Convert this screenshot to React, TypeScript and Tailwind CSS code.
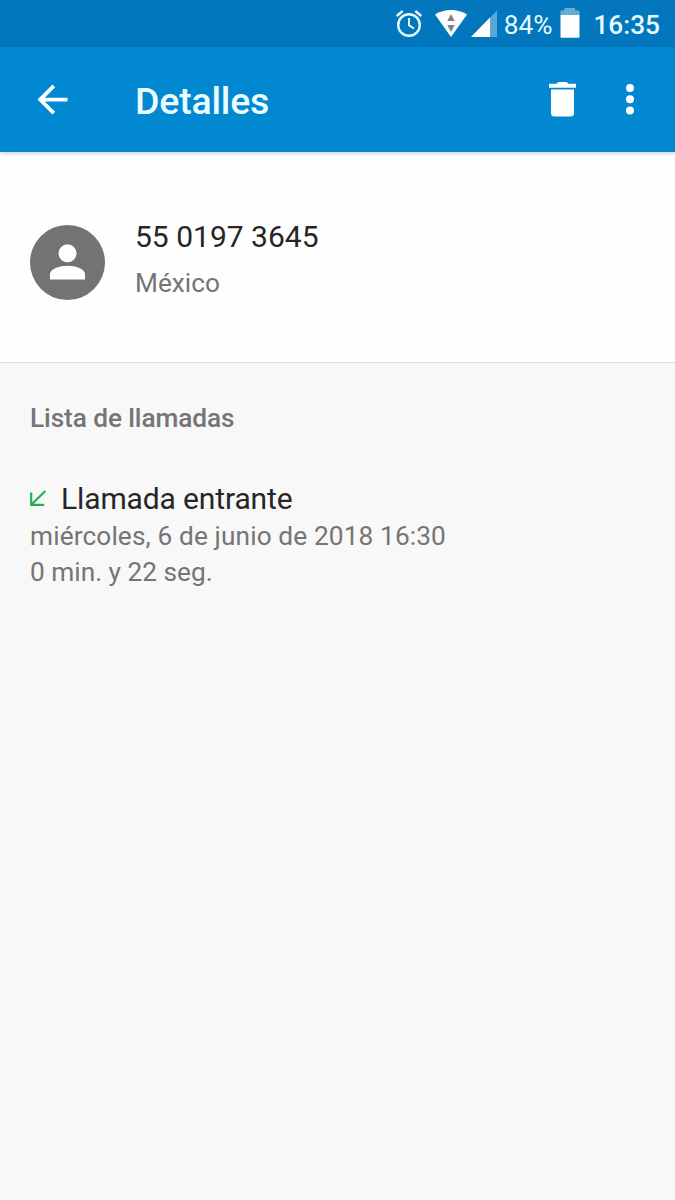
import React from 'react';

interface Call {
  id: number;
  type: string;
  date: string;
  duration: string;
}

const calls: Call[] = [
  {
    id: 1,
    type: 'Llamada entrante',
    date: 'miércoles, 6 de junio de 2018 16:30',
    duration: '0 min. y 22 seg.',
  },
];

export default function App() {
  return (
    <div className="flex h-[1200px] w-[675px] flex-col overflow-hidden bg-[#f8f8f8] font-['Roboto',sans-serif] text-[26.25px] leading-9 text-[#757575]">
      <StatusBar />
      <AppBar />
      <ContactHeader number="55 0197 3645" location="México" />
      <CallList calls={calls} />
    </div>
  );
}

function StatusBar() {
  return (
    <div className="flex h-[47px] shrink-0 items-center justify-end bg-[#0277bd] pr-[15px] text-[#e6fbff]">
      <AlarmIcon className="mr-3 h-[47px] w-7" />
      <WifiIcon className="mr-1 h-[47px] w-8" />
      <SignalIcon className="mr-[7px] h-[47px] w-[26px]" />
      <span className="mr-2 pt-0.5">84%</span>
      <BatteryIcon className="mr-[13px] h-[47px] w-5" />
      <span className="pt-0.5 font-medium">16:35</span>
    </div>
  );
}

function AppBar() {
  return (
    <header className="relative flex h-[105px] shrink-0 items-center bg-[#0288d1] pr-[23px] pl-[30px] text-white shadow-[0_2px_3px_rgba(0,60,90,0.18)]">
      <button aria-label="Atrás">
        <BackIcon className="h-[45px] w-[45px]" />
      </button>
      <h1 className="ml-[60px] pt-0.5 text-[37.5px] leading-[44px] font-medium tracking-[-0.2px] text-[#e9fcff]">
        Detalles
      </h1>
      <button aria-label="Eliminar" className="ml-auto">
        <TrashIcon className="h-[45px] w-[45px]" />
      </button>
      <button aria-label="Más opciones" className="ml-[22px]">
        <MoreIcon className="h-[45px] w-[45px]" />
      </button>
    </header>
  );
}

function ContactHeader({ number, location }: { number: string; location: string }) {
  return (
    <section className="flex h-[211px] shrink-0 border-b border-[#dcdcdc] bg-[#fefefe] px-[30px] pt-[67px]">
      <PersonIcon className="mt-[6px] h-[75px] w-[75px]" />
      <div className="ml-[30px] space-y-[10px]">
        <h2 className="text-[30px] leading-9 text-[#262626]">{number}</h2>
        <p>{location}</p>
      </div>
    </section>
  );
}

function CallList({ calls }: { calls: Call[] }) {
  return (
    <section className="px-[30px] pt-[37px]">
      <h3 className="font-medium tracking-[-0.1px]">Lista de llamadas</h3>
      <ul className="mt-[45px]">
        {calls.map((call) => (
          <li key={call.id}>
            <div className="mb-px flex items-center text-[30px] leading-9 tracking-[-0.13px] text-[#262626]">
              <IncomingIcon className="mr-[14px] mb-0.5 h-[17px] w-[17px]" />
              {call.type}
            </div>
            <p className="tracking-[0.115px]">{call.date}</p>
            <p>{call.duration}</p>
          </li>
        ))}
      </ul>
    </section>
  );
}

type IconProps = React.SVGProps<SVGSVGElement>;

function AlarmIcon(props: IconProps) {
  return (
    <svg {...props} viewBox="0 0 28 47" fill="none" stroke="currentColor" strokeWidth="2.4">
      <circle cx="14" cy="25" r="10.8" />
      <path d="M14 18v7.300l5 3.200" strokeWidth="2" />
      <path d="M1.700 16l6-5M26.300 16l-6-5" />
    </svg>
  );
}

function WifiIcon(props: IconProps) {
  return (
    <svg {...props} viewBox="0 0 32 47">
      <path d="M0 14.500C9 8.500 23 8.500 32 14.500L16 37z" fill="#fff" />
      <path d="M16 14l3.700 7h-7.400zM16 32l-3.700-7h7.400z" fill="#7e8185" />
    </svg>
  );
}

function SignalIcon(props: IconProps) {
  return (
    <svg {...props} viewBox="0 0 26 47">
      <path d="M0 37L26 10.500V37z" fill="#fff" fillOpacity=".35" />
      <path d="M0 37L19 17.600V37z" fill="#fff" />
    </svg>
  );
}

function BatteryIcon(props: IconProps) {
  return (
    <svg {...props} viewBox="0 0 20 47">
      <path d="M.5 15v-3.500q0-1 1-1h3V8h10.500v2.500h3.500q1 0 1 1V15z" fill="#fff" fillOpacity=".4" />
      <path d="M.5 15h19v22q0 .7-.7.700H1.200q-.7 0-.7-.7z" fill="#fff" />
    </svg>
  );
}

function BackIcon(props: IconProps) {
  return (
    <svg {...props} viewBox="0 0 24 24" fill="currentColor">
      <path d="M20 11H7.830l5.590-5.590L12 4l-8 8 8 8 1.410-1.410L7.830 13H20v-2z" />
    </svg>
  );
}

function TrashIcon(props: IconProps) {
  return (
    <svg {...props} viewBox="0 0 45 45" fill="currentColor">
      <path d="M9 6.800h7.500q1-1.700 2.500-1.700h7q1.500 0 2.500 1.700H36v4H9z" />
      <path d="M11 12.500h23V36q0 3.500-3.500 3.500h-16Q11 39.500 11 36z" />
    </svg>
  );
}

function MoreIcon(props: IconProps) {
  return (
    <svg {...props} viewBox="0 0 45 45" fill="currentColor">
      <circle cx="23" cy="11" r="4" />
      <circle cx="23" cy="22.300" r="4" />
      <circle cx="23" cy="33.600" r="4" />
    </svg>
  );
}

function PersonIcon(props: IconProps) {
  return (
    <svg {...props} viewBox="0 0 75 75">
      <circle cx="37.500" cy="37.500" r="37.500" fill="#737373" />
      <circle cx="37.500" cy="28.300" r="9" fill="#fff" />
      <path d="M20 54.500V49c0-5 9.500-8.300 17.500-8.300S55 44 55 49v5.500z" fill="#fff" />
    </svg>
  );
}

function IncomingIcon(props: IconProps) {
  return (
    <svg {...props} viewBox="0 0 17 17" fill="none" stroke="#1fb254" strokeWidth="2.200">
      <path d="M1.200 2.500v12.300h13M1.500 14.500L15.300 1" />
    </svg>
  );
}
